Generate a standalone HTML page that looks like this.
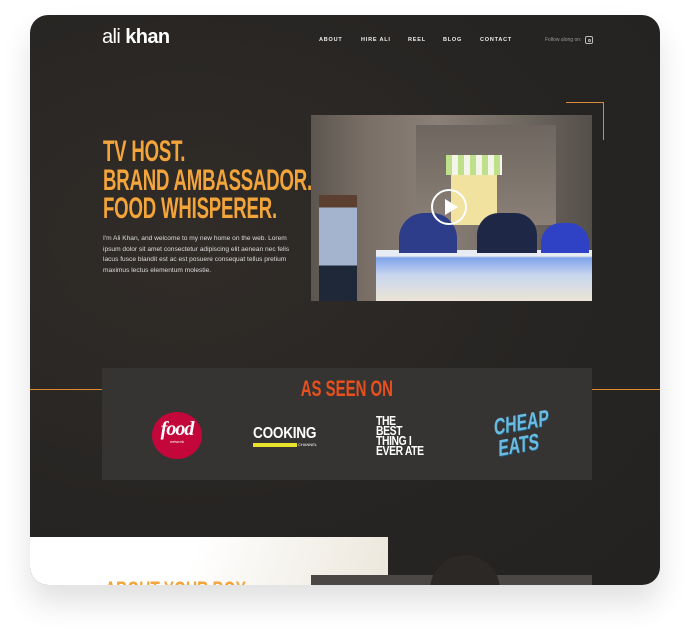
<!DOCTYPE html>
<html><head><meta charset="utf-8"><style>
*{margin:0;padding:0;box-sizing:border-box}
body{width:690px;height:630px;background:#fff;position:relative;overflow:hidden;font-family:"Liberation Sans",sans-serif}
.card{position:absolute;left:30px;top:15px;width:630px;height:570px;border-radius:18px;overflow:hidden;background:radial-gradient(ellipse at 25% 40%,#312c28 0%,#272523 55%,#232220 100%);box-shadow:0 18px 30px rgba(0,0,0,.12)}
.abs{position:absolute}
.cond{font-weight:bold;transform-origin:0 0}
.nav a{position:absolute;top:22px;font-size:5.5px;font-weight:bold;color:#eee;letter-spacing:.8px}
</style></head><body>
<div class="card">
  <div class="abs" style="left:72px;top:11px;color:#fff;font-size:20px;letter-spacing:-.6px"><span style="font-weight:300">ali</span> <b>khan</b></div>
  <div class="nav">
    <a style="left:289px">ABOUT</a><a style="left:331px">HIRE ALI</a><a style="left:378px">REEL</a><a style="left:413px">BLOG</a><a style="left:450px">CONTACT</a>
  </div>
  <div class="abs" style="left:515px;top:22px;font-size:5px;color:#999">Follow along on:</div>
  <div class="abs" style="left:555px;top:21px;width:8px;height:8px;border:1px solid #bbb;border-radius:2px"><div style="position:absolute;left:1.5px;top:1.5px;width:3px;height:3px;border:1px solid #bbb;border-radius:50%"></div></div>

  <div class="abs cond" style="left:73px;top:123px;color:#f3a43a;font-size:30px;line-height:28.5px;letter-spacing:-.3px;transform:scaleX(.62);white-space:nowrap">TV HOST.<br>BRAND AMBASSADOR.<br>FOOD WHISPERER.</div>
  <div class="abs" style="left:73px;top:219px;width:200px;color:#ddd;font-size:6.6px;line-height:10.5px">I'm Ali Khan, and welcome to my new home on the web. Lorem ipsum dolor sit amet consectetur adipiscing elit aenean nec felis lacus fusce blandit est ac est posuere consequat tellus pretium maximus lectus elementum molestie.</div>

  <div class="abs" style="left:536px;top:87px;width:38px;height:38px;border-top:1px solid #d98a3a;border-right:1px solid #d98a3a"></div>
  <div class="abs" style="left:281px;top:100px;width:281px;height:186px;overflow:hidden;background:linear-gradient(90deg,#5c5650 0%,#7a6f66 20%,#8b8078 45%,#6e6760 75%,#554f4a 100%)">
    <div class="abs" style="left:105px;top:10px;width:140px;height:100px;background:linear-gradient(180deg,#6e665f,#8a8077)"></div>
    <div class="abs" style="left:135px;top:40px;width:56px;height:20px;background:repeating-linear-gradient(90deg,#bfe08a 0 6px,#f4f4ea 6px 12px)"></div>
    <div class="abs" style="left:140px;top:60px;width:46px;height:50px;background:#f1e2a0"></div>
    <div class="abs" style="left:65px;top:135px;width:216px;height:51px;background:linear-gradient(180deg,#e8ecf3 0,#e8ecf3 6px,#7ea3ea 8px,#c8d6ef 25px,#ece4d6 100%)"></div>
    <div class="abs" style="left:8px;top:80px;width:38px;height:106px;background:linear-gradient(180deg,#5b3f30 0,#5b3f30 12px,#a4b4cf 13px,#a4b4cf 70px,#1f2838 71px)"></div>
    <div class="abs" style="left:88px;top:98px;width:58px;height:40px;border-radius:25px 25px 0 0;background:#2e3d8a"></div>
    <div class="abs" style="left:166px;top:98px;width:60px;height:40px;border-radius:22px 22px 0 0;background:#1e2846"></div>
    <div class="abs" style="left:230px;top:108px;width:48px;height:30px;border-radius:20px 20px 0 0;background:#2f41c4"></div>
    <div class="abs" style="left:120px;top:74px;width:36px;height:36px;border:2px solid #fff;border-radius:50%"></div>
    <div class="abs" style="left:134px;top:84px;width:0;height:0;border-left:13px solid #fff;border-top:8px solid transparent;border-bottom:8px solid transparent"></div>
  </div>

  <div class="abs" style="left:0;top:374px;width:144px;height:1px;background:#e08a30"></div>
  <div class="abs" style="left:491px;top:374px;width:139px;height:1px;background:#e08a30"></div>
  <div class="abs" style="left:72px;top:353px;width:490px;height:112px;background:#353433">
    <div class="abs" style="left:0;width:490px;top:8px;text-align:center"><span style="display:inline-block;font-weight:bold;color:#e8501e;font-size:22px;transform:scaleX(.68)">AS SEEN ON</span></div>
    <div class="abs" style="left:50px;top:44px;width:50px;height:47px;border-radius:50%;background:#c4073a;color:#fff;text-align:center">
      <div style="font:italic bold 20px 'Liberation Serif',serif;margin-top:6px;letter-spacing:-1px">food</div>
      <div style="font-size:4px;margin-top:-2px">network</div></div>
    <div class="abs cond" style="left:151px;top:57px;color:#fff;font-size:16px;letter-spacing:-.3px;transform:scaleX(.85)">COOKING</div>
    <div class="abs" style="left:151px;top:75px;width:44px;height:4px;background:#e8e22a"></div>
    <div class="abs" style="left:196px;top:74px;font-size:4px;color:#fff">CHANNEL</div>
    <div class="abs cond" style="left:274px;top:48px;color:#fff;font-size:13px;line-height:10px;letter-spacing:-.5px;transform:scaleX(.8);white-space:nowrap">THE<br>BEST<br>THING I<br>EVER ATE</div>
    <div class="abs cond" style="left:392px;top:48px;color:#6bbbe0;font-size:23px;line-height:22px;transform:skewY(-10deg) scaleX(.68);text-shadow:1px 1px 0 #1e5c80;white-space:nowrap">CHEAP<br>&nbsp;EATS</div>
  </div>

  <div class="abs" style="left:0;top:522px;width:358px;height:48px;background:linear-gradient(110deg,#fff 45%,#ece7dc 100%)">
    <div class="abs cond" style="left:75px;top:40px;color:#f3a43a;font-size:22px;transform:scaleX(.7);white-space:nowrap">ABOUT YOUR BOY</div>
  </div>
  <div class="abs" style="left:281px;top:560px;width:281px;height:10px;background:#4a4744"></div>
  <div class="abs" style="left:400px;top:540px;width:70px;height:40px;border-radius:35px 35px 0 0;background:#2b2826"></div>
</div>
</body></html>
